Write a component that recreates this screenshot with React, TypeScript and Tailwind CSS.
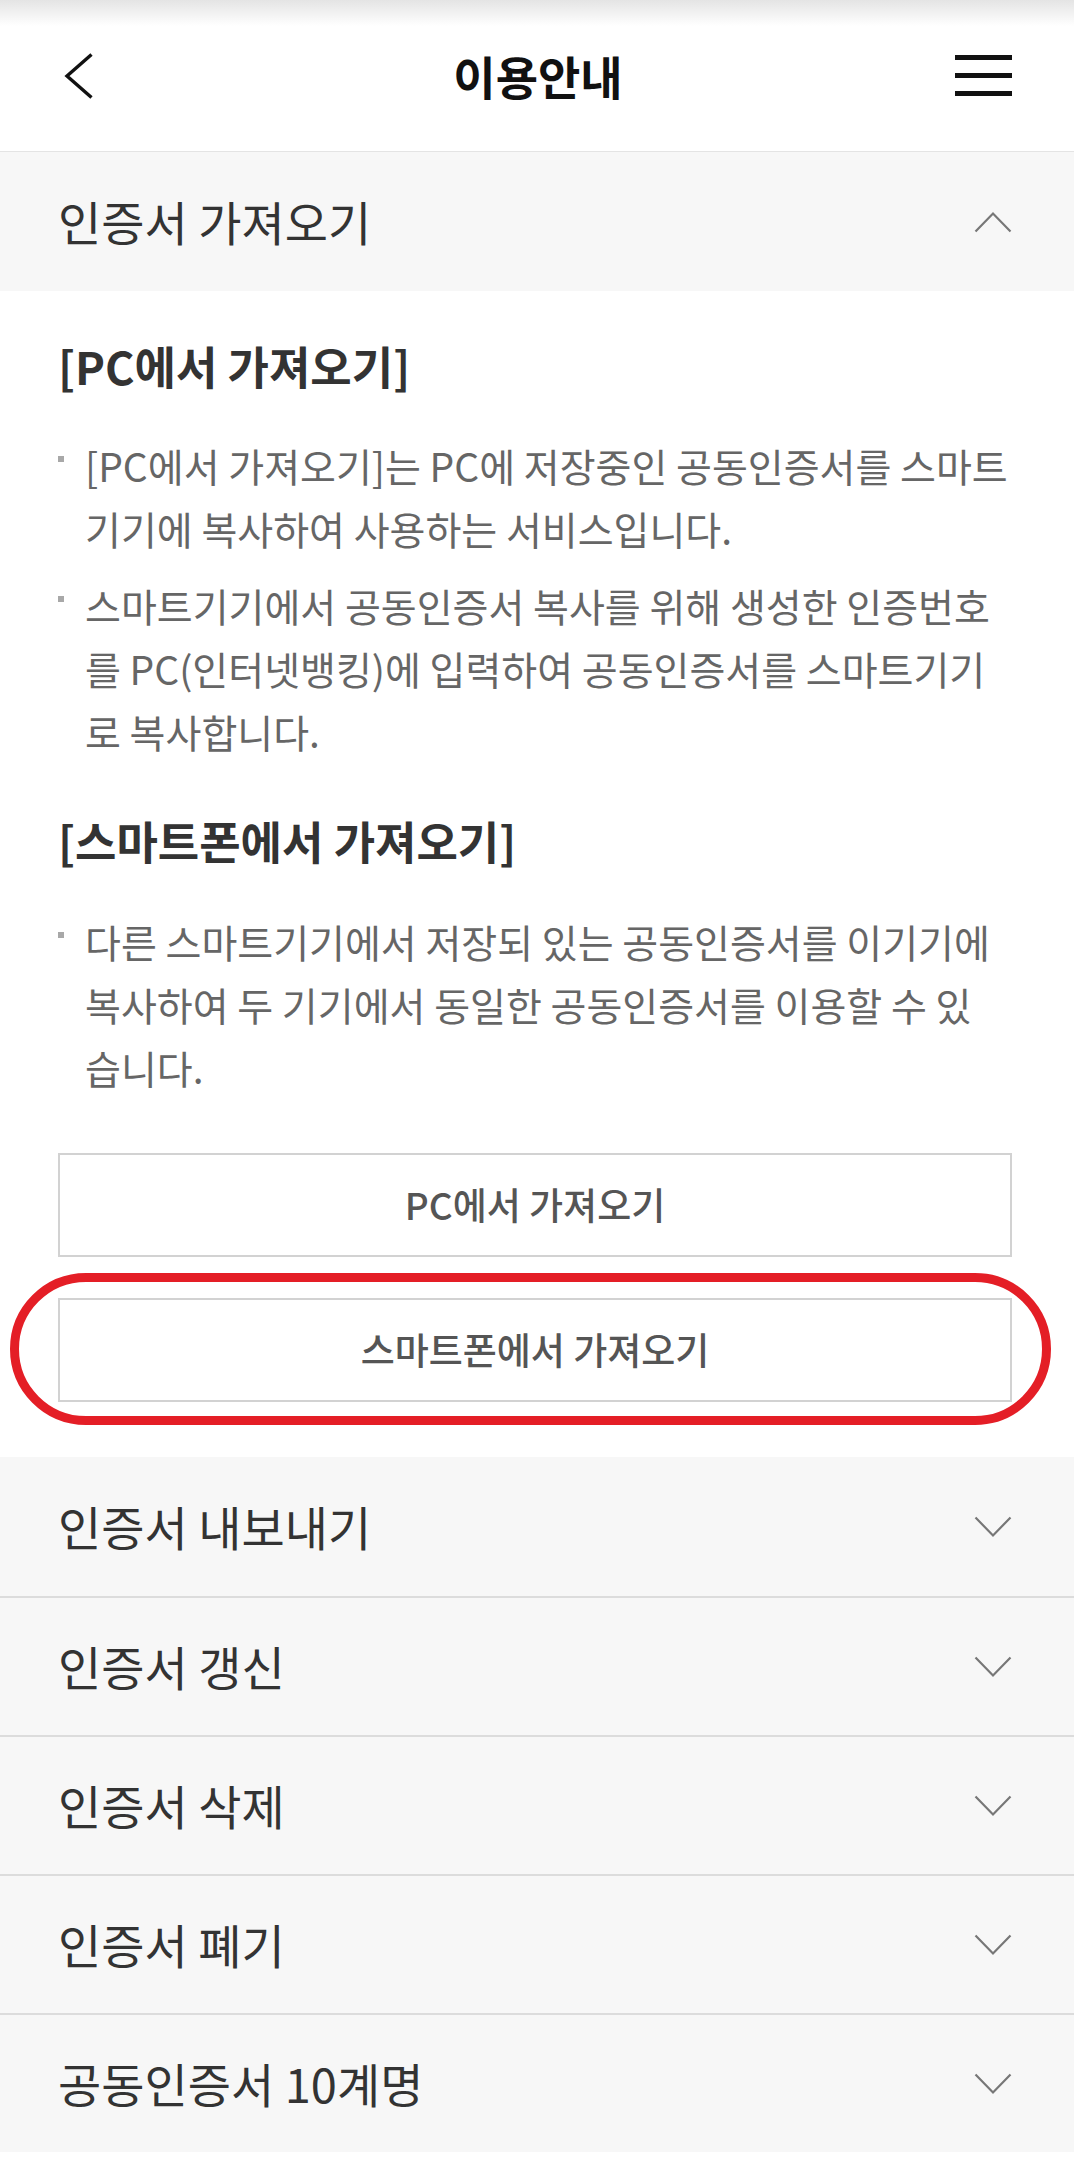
import React from 'react';

const ChevronUp = () => (
  <svg width="38" height="22" viewBox="0 0 38 22" fill="none">
    <polyline points="1.5,20.5 19,2.5 36.5,20.5" stroke="#777" strokeWidth="2.2" />
  </svg>
);

const ChevronDown = () => (
  <svg width="38" height="22" viewBox="0 0 38 22" fill="none">
    <polyline points="1.5,1.5 19,19.5 36.5,1.5" stroke="#777" strokeWidth="2.2" />
  </svg>
);

const Bullet: React.FC<{ lines: string[]; className?: string }> = ({ lines, className }) => (
  <li className={`relative pl-[27px] ${className ?? ''}`}>
    <span className="absolute left-0 top-[22px] h-[6px] w-[6px] bg-[#a8a8a8]" />
    {lines.map((l) => (
      <span key={l} className="block whitespace-nowrap">
        {l}
      </span>
    ))}
  </li>
);

const items = ['인증서 내보내기', '인증서 갱신', '인증서 삭제', '인증서 폐기', '공동인증서 10계명'];

export default function App() {
  return (
    <div className="w-[1074px] min-h-[2174px] bg-white font-['Noto_Sans_CJK_KR','Noto_Sans',sans-serif]">
      {/* header */}
      <header className="flex h-[152px] items-center border-b border-[#e4e4e4] bg-[linear-gradient(to_bottom,#e4e4e4_0px,#ffffff_26px)] pl-[64px] pr-[62px]">
        <div className="w-[60px]">
          <svg width="30" height="46" viewBox="0 0 30 46" fill="none">
            <polyline points="27.5,1.5 3,23 27.5,44.5" stroke="#111" strokeWidth="3.4" />
          </svg>
        </div>
        <h1 className="flex-1 text-center text-[46px] font-bold text-[#111]">이용안내</h1>
        <div className="flex w-[60px] flex-col items-end gap-[13px]">
          <span className="block h-[5px] w-[57px] bg-[#111]" />
          <span className="block h-[5px] w-[57px] bg-[#111]" />
          <span className="block h-[5px] w-[57px] bg-[#111]" />
        </div>
      </header>

      {/* open accordion */}
      <div className="flex h-[139px] items-center justify-between bg-[#f7f7f7] pl-[58px] pr-[62px]">
        <span className="text-[47px] text-[#333]">인증서 가져오기</span>
        <ChevronUp />
      </div>

      <section className="bg-white pl-[58px] pr-[62px] pt-[45px] pb-[55px]">
        <h3 className="text-[45px] font-bold leading-[60px] text-[#333]">[PC에서 가져오기]</h3>
        <ul className="mt-[38px] text-[39px] leading-[63px] text-[#666]">
          <Bullet lines={['[PC에서 가져오기]는 PC에 저장중인 공동인증서를 스마트', '기기에 복사하여 사용하는 서비스입니다.']} />
          <Bullet
            className="mt-[14px]"
            lines={[
              '스마트기기에서 공동인증서 복사를 위해 생성한 인증번호',
              '를 PC(인터넷뱅킹)에 입력하여 공동인증서를 스마트기기',
              '로 복사합니다.',
            ]}
          />
        </ul>

        <h3 className="mt-[48px] text-[45px] font-bold leading-[60px] text-[#333]">[스마트폰에서 가져오기]</h3>
        <ul className="mt-[39px] text-[39px] leading-[63px] text-[#666]">
          <Bullet
            lines={[
              '다른 스마트기기에서 저장되 있는 공동인증서를 이기기에',
              '복사하여 두 기기에서 동일한 공동인증서를 이용할 수 있',
              '습니다.',
            ]}
          />
        </ul>

        <button className="mt-[54px] flex h-[104px] w-full items-center justify-center border-2 border-[#d2d2d2] bg-white text-[37px] font-medium text-[#555]">
          PC에서 가져오기
        </button>
        <div className="relative mt-[41px]">
          <button className="flex h-[104px] w-full items-center justify-center border-2 border-[#d2d2d2] bg-white text-[37px] font-medium text-[#555]">
            스마트폰에서 가져오기
          </button>
          <div className="pointer-events-none absolute left-[-48px] right-[-39px] top-[-25px] bottom-[-23px] rounded-full border-[9px] border-[#e41e26]" />
        </div>
      </section>

      {/* collapsed accordions */}
      {items.map((t, i) => (
        <div
          key={t}
          className={`flex h-[139px] items-center justify-between bg-[#f7f7f7] pl-[58px] pr-[62px] ${
            i > 0 ? 'border-t-2 border-[#dcdcdc]' : ''
          }`}
        >
          <span className="text-[47px] text-[#333]">{t}</span>
          <ChevronDown />
        </div>
      ))}
    </div>
  );
}
